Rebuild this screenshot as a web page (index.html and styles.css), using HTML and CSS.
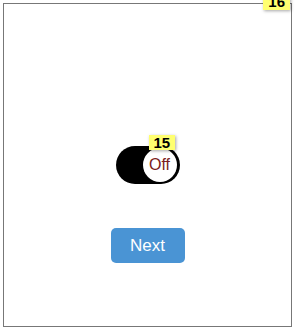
FILE: index.html
```html
<!DOCTYPE html>
<html lang="en">
<head>
    <meta charset="UTF-8">
    <meta name="viewport" content="width=device-width, initial-scale=1.0">
    <title>Toggle</title>
    <link rel="stylesheet" href="styles.css">
</head>
<body>
    <div class="frame">
        <span class="tag tag-frame">16</span>
        <div class="switch" onclick="toggleSwitch(this)">
            <span class="tag tag-switch">15</span>
            <div class="knob">Off</div>
        </div>
        <button class="next">Next</button>
    </div>

    <script>
        // bascule On / Off
        function toggleSwitch(el) {
            let knob = el.querySelector('.knob');
            el.classList.toggle('on');
            knob.textContent = el.classList.contains('on') ? 'On' : 'Off';
        }
    </script>
</body>
</html>
```

FILE: styles.css
```css
body { margin: 0; font-family: Arial, "Liberation Sans", sans-serif; background: white; }
.frame {
    position: relative;
    margin: 3px;
    width: 287px;
    height: 180px;
    padding-top: 142px;
    border: 1px solid #777;
    display: flex;
    flex-direction: column;
    align-items: center;
}
.switch {
    position: relative;
    width: 64px;
    height: 38px;
    border-radius: 19px;
    background: black;
    cursor: pointer;
}
.knob {
    position: absolute;
    top: 2px;
    right: 3px;
    width: 34px;
    height: 34px;
    border-radius: 50%;
    background: white;
    color: #7b2020;
    font-size: 16px;
    line-height: 34px;
    text-align: center;
}
.switch.on .knob { right: auto; left: 3px; }
.next {
    margin-top: 44px;
    width: 74px;
    height: 35px;
    border: none;
    border-radius: 5px;
    background: #4a94d4;
    color: white;
    font-family: Arial, "Liberation Sans", sans-serif;
    font-size: 17px;
    cursor: pointer;
}

/* étiquettes jaunes */
.tag {
    position: absolute;
    background: #ffff70;
    color: black;
    font-weight: bold;
    font-size: 15px;
    line-height: 15px;
    padding: 0 5px;
    box-shadow: 1px 1px 3px rgba(0, 0, 0, 0.35);
    z-index: 2;
}
.tag-switch { top: -11px; left: 33px; }
.tag-frame { top: -11px; right: 1px; padding: 1px 5px; }
```
